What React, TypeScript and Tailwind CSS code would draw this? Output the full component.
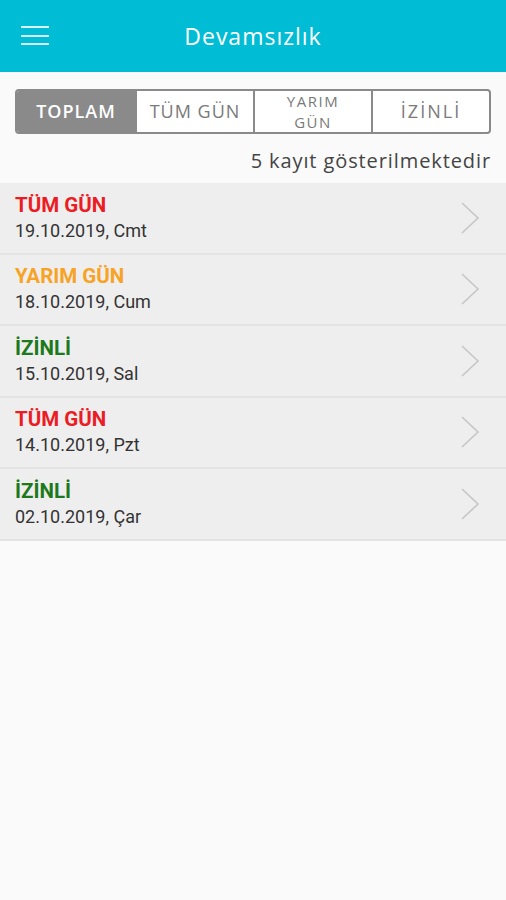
const rows = [
  { label: 'TÜM GÜN', color: 'text-[#ec1c24]', date: '19.10.2019, Cmt' },
  { label: 'YARIM GÜN', color: 'text-[#f7a325]', date: '18.10.2019, Cum' },
  { label: 'İZİNLİ', color: 'text-[#1c7a1c]', date: '15.10.2019, Sal' },
  { label: 'TÜM GÜN', color: 'text-[#ec1c24]', date: '14.10.2019, Pzt' },
  { label: 'İZİNLİ', color: 'text-[#1c7a1c]', date: '02.10.2019, Çar' },
]

function Chevron() {
  return (
    <svg width="20" height="32" viewBox="0 0 20 32" fill="none">
      <polyline points="2,1 18,16 2,31" stroke="#c6c6c6" strokeWidth="1.6" />
    </svg>
  )
}

export default function App() {
  return (
    <div className="min-h-[900px] bg-[#fafafa] font-['Open_Sans',sans-serif]">
      <header className="relative flex h-[72px] items-center justify-center bg-[#00bcd4]">
        <button className="absolute left-[21px] top-[26px] flex w-[28px] flex-col gap-[6.5px]">
          <span className="h-[2px] w-full bg-[#d8f4f8]" />
          <span className="h-[2px] w-full bg-[#d8f4f8]" />
          <span className="h-[2px] w-full bg-[#d8f4f8]" />
        </button>
        <h1 className="text-[23px] tracking-[1px] text-white">Devamsızlık</h1>
      </header>

      <div className="px-[15px] pt-[17px]">
        <div className="grid h-[45px] grid-cols-4 overflow-hidden rounded-[4px] border-2 border-[#8a8a8a] bg-white text-[18px] tracking-[1px] text-[#7a7a7a]">
          <div className="flex items-center justify-center bg-[#8a8a8a] font-semibold text-white">TOPLAM</div>
          <div className="flex items-center justify-center border-l-2 border-[#8a8a8a]">TÜM GÜN</div>
          <div className="flex items-center justify-center border-l-2 border-[#8a8a8a] text-center text-[15px] leading-[20.5px] tracking-[1.5px]">
            <span>
              YARIM
              <br />
              GÜN
            </span>
          </div>
          <div className="flex items-center justify-center border-l-2 border-[#8a8a8a] tracking-[2px]">İZİNLİ</div>
        </div>
        <p className="mt-[14px] text-right text-[20px] leading-[26px] tracking-[0.9px] text-[#444]">5 kayıt gösterilmektedir</p>
      </div>

      <ul className="mt-[9px] font-['Roboto',sans-serif]">
        {rows.map((r, i) => (
          <li
            key={i}
            className="flex h-[71.5px] items-center justify-between border-b-2 border-[#e3e3e3] bg-[#efeeee] pl-[15px] pr-[26px]"
          >
            <div>
              <div className={`text-[20.5px] font-bold leading-[26px] ${r.color}`}>{r.label}</div>
              <div className="text-[18px] leading-[26px] text-[#333]">{r.date}</div>
            </div>
            <Chevron />
          </li>
        ))}
      </ul>
    </div>
  )
}
